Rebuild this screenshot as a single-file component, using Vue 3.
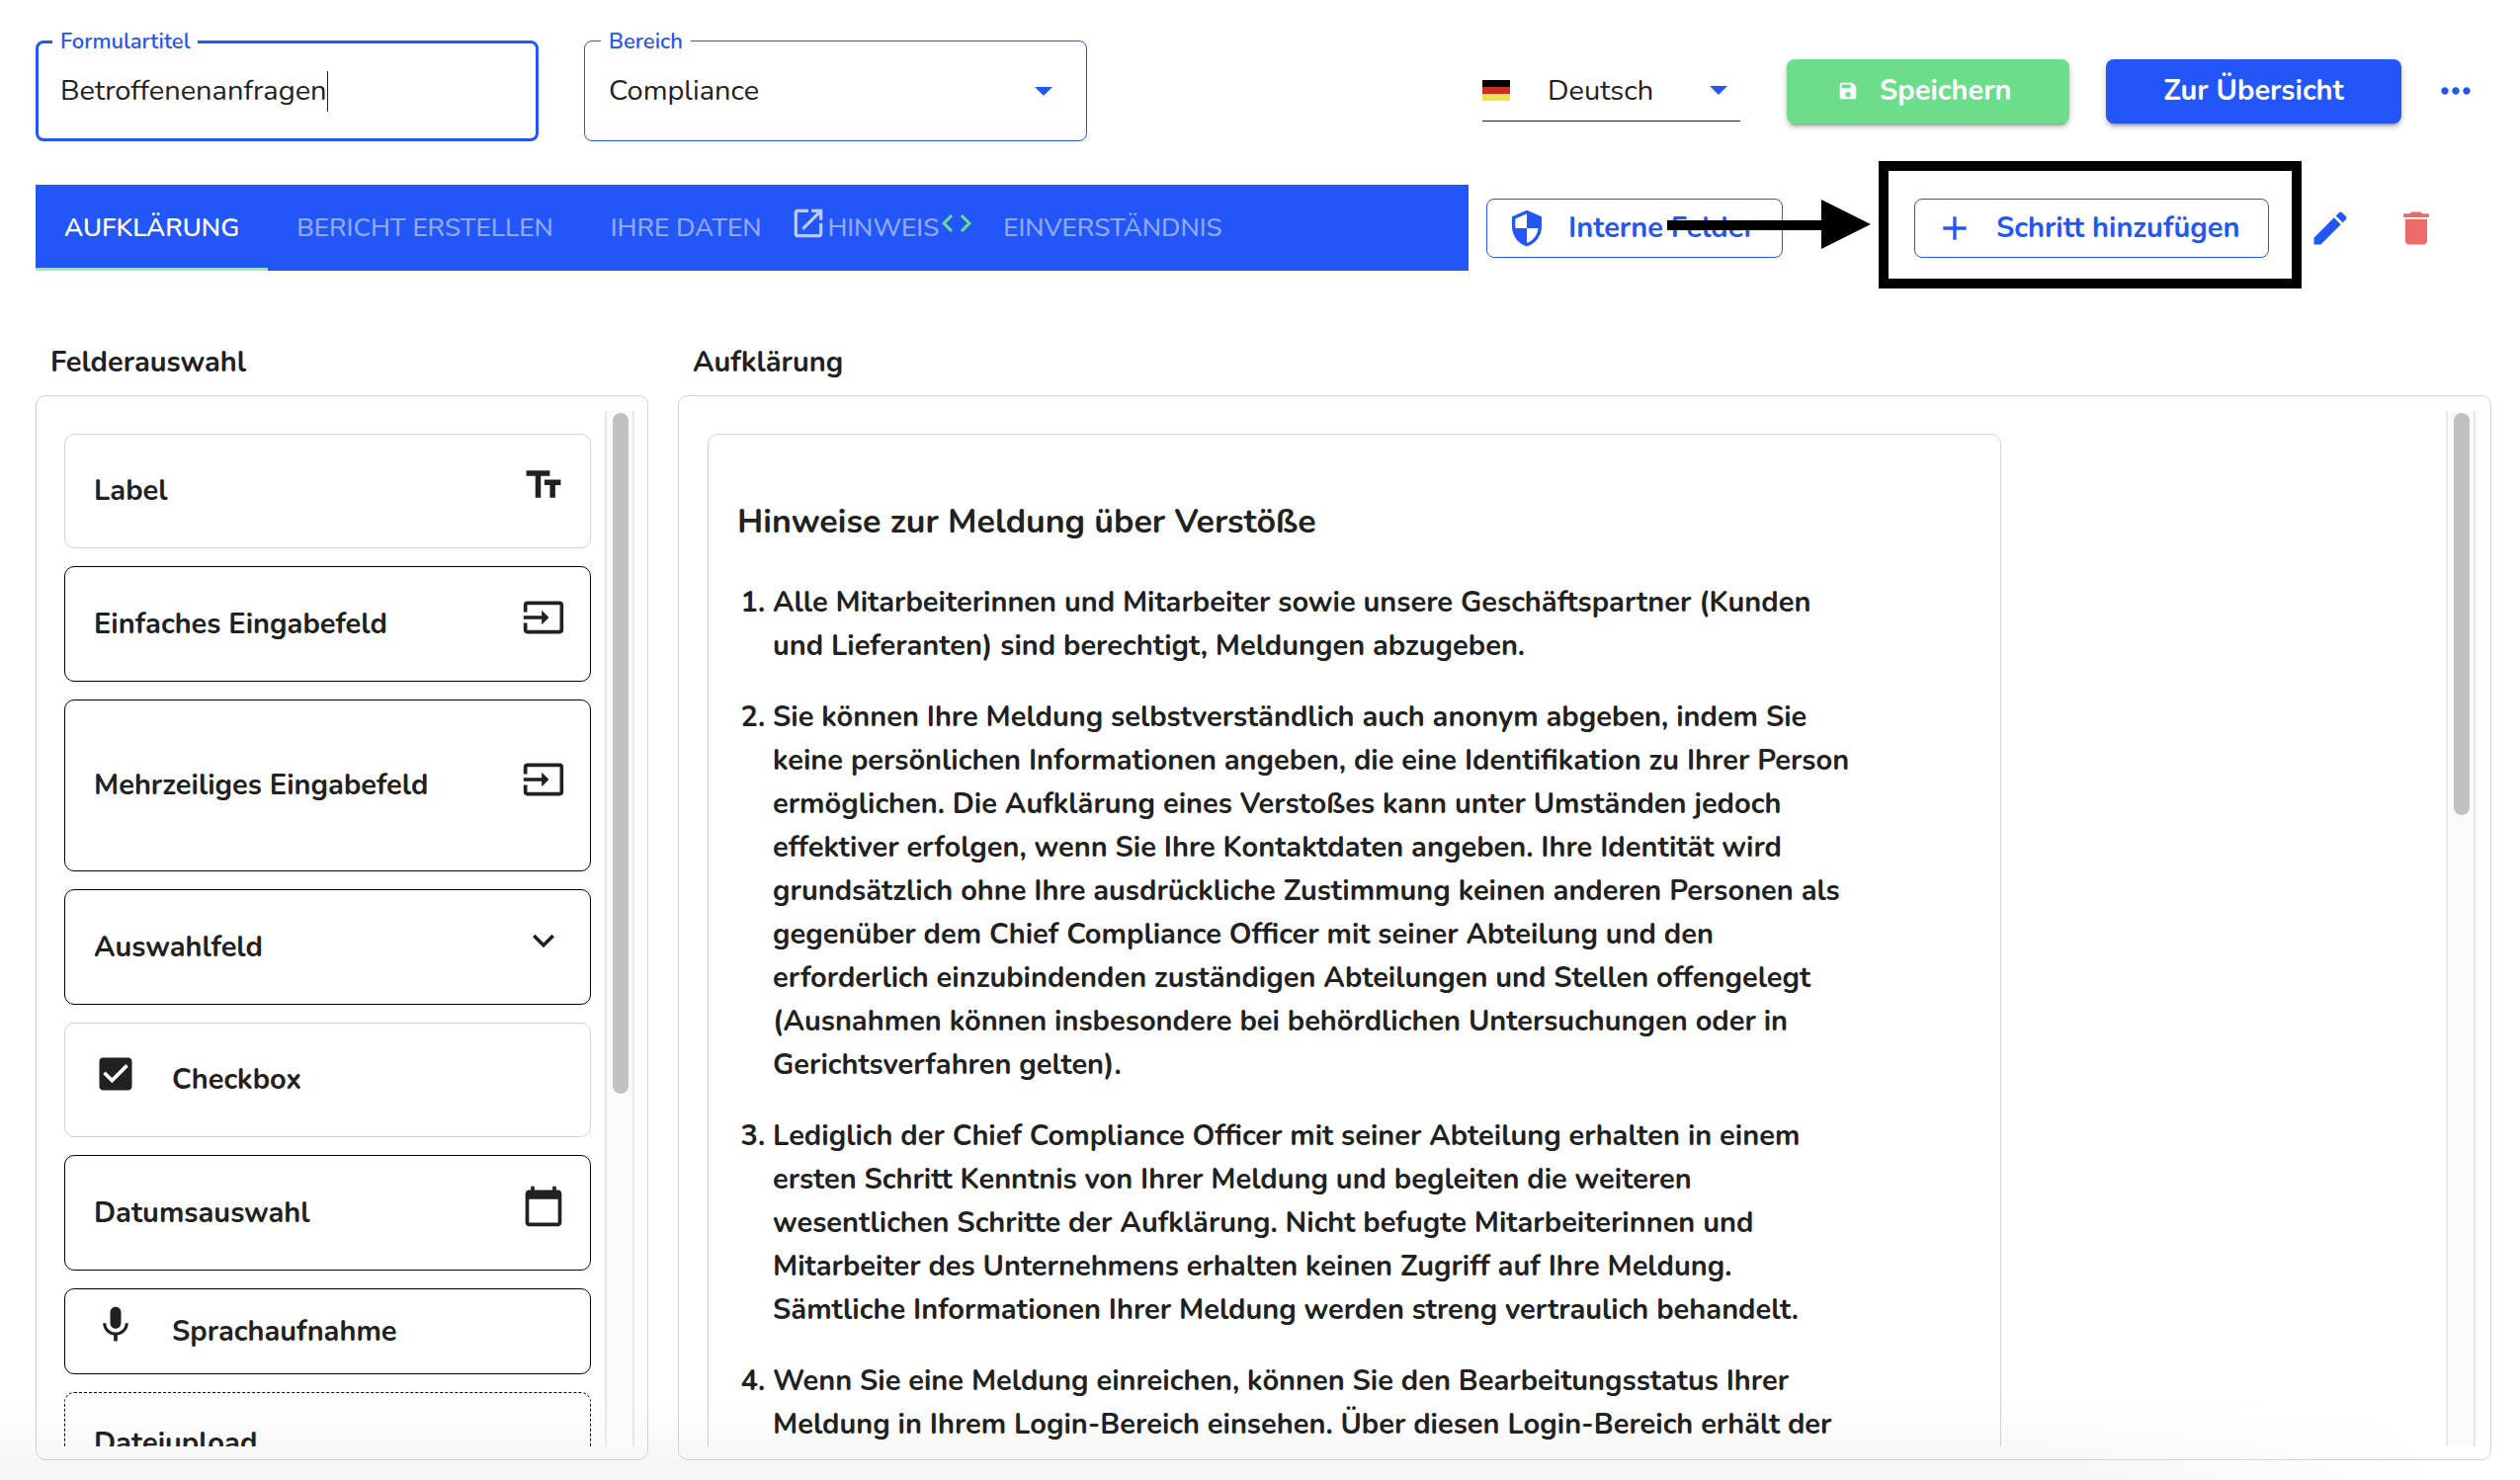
<script setup>
import { ref } from 'vue'

const title = ref('Betroffenenanfragen')
const area = ref('Compliance')
const language = ref('Deutsch')

const icons = {
  text: 'M2.5 4v3h5v12h3V7h5V4h-13zm19 5h-9v3h3v7h3v-7h3V9z',
  input: 'M21 3.01H3c-1.1 0-2 .9-2 2V9h2V4.99h18v14.03H3V15H1v4.01c0 1.1.9 1.98 2 1.98h18c1.1 0 2-.88 2-1.98v-14c0-1.11-.9-2-2-2zM11 16l4-4-4-4v3H1v2h10v3z',
  chevron: 'M16.59 8.59L12 13.17 7.41 8.59 6 10l6 6 6-6z',
  checkbox: 'M19 3H5c-1.11 0-2 .9-2 2v14c0 1.1.89 2 2 2h14c1.11 0 2-.9 2-2V5c0-1.1-.89-2-2-2zm-9 14l-5-5 1.41-1.41L10 14.17l7.59-7.59L19 8l-9 9z',
  calendar: 'M20 3h-1V1h-2v2H7V1H5v2H4c-1.1 0-2 .9-2 2v16c0 1.1.9 2 2 2h16c1.1 0 2-.9 2-2V5c0-1.1-.9-2-2-2zm0 18H4V8h16v13z',
  mic: 'M12 14c1.66 0 2.99-1.34 2.99-3L15 5c0-1.66-1.34-3-3-3S9 3.34 9 5v6c0 1.66 1.34 3 3 3zm5.3-3c0 3-2.54 5.1-5.3 5.1S6.7 14 6.7 11H5c0 3.41 2.72 6.23 6 6.72V21h2v-3.28c3.28-.48 6-3.3 6-6.72h-1.7z',
  save: 'M17 3H5c-1.11 0-2 .9-2 2v14c0 1.1.89 2 2 2h14c1.1 0 2-.9 2-2V7l-4-4zm-5 16c-1.66 0-3-1.34-3-3s1.34-3 3-3 3 1.34 3 3-1.34 3-3 3zm3-10H5V5h10v4z',
  more: 'M6 10c-1.1 0-2 .9-2 2s.9 2 2 2 2-.9 2-2-.9-2-2-2zm12 0c-1.1 0-2 .9-2 2s.9 2 2 2 2-.9 2-2-.9-2-2-2zm-6 0c-1.1 0-2 .9-2 2s.9 2 2 2 2-.9 2-2-.9-2-2-2z',
  open: 'M19 19H5V5h7V3H5c-1.11 0-2 .9-2 2v14c0 1.1.89 2 2 2h14c1.1 0 2-.9 2-2v-7h-2v7zM14 3v2h3.59l-9.83 9.83 1.41 1.41L19 6.41V10h2V3h-7z',
  code: 'M9.4 16.6L4.8 12l4.6-4.6L8 6l-6 6 6 6 1.4-1.4zm5.2 0l4.6-4.6-4.6-4.6L16 6l6 6-6 6-1.4-1.4z',
  shield: 'M12 1L3 5v6c0 5.55 3.84 10.74 9 12 5.16-1.26 9-6.45 9-12V5l-9-4zm0 10.99h7c-.53 4.12-3.28 7.79-7 8.94V12H5V6.3l7-3.11v8.8z',
  plus: 'M19 13h-6v6h-2v-6H5v-2h6V5h2v6h6v2z',
  pencil: 'M3 17.25V21h3.75L17.81 9.94l-3.75-3.75L3 17.25zM20.71 7.04c.39-.39.39-1.02 0-1.41l-2.34-2.34c-.39-.39-1.02-.39-1.41 0l-1.83 1.83 3.75 3.75 1.83-1.83z',
  trash: 'M6 19c0 1.1.9 2 2 2h8c1.1 0 2-.9 2-2V7H6v12zM19 4h-3.5l-1-1h-5l-1 1H5v2h14V4z',
}

const fields = [
  { label: 'Label', icon: 'text', kind: 'light' },
  { label: 'Einfaches Eingabefeld', icon: 'input' },
  { label: 'Mehrzeiliges Eingabefeld', icon: 'input', size: 'tall' },
  { label: 'Auswahlfeld', icon: 'chevron' },
  { label: 'Checkbox', icon: 'checkbox', kind: 'light', lead: true },
  { label: 'Datumsauswahl', icon: 'calendar' },
  { label: 'Sprachaufnahme', icon: 'mic', size: 'low', lead: true },
  { label: 'Dateiupload', kind: 'dashed', size: 'drop' },
]

const notes = [
  'Alle Mitarbeiterinnen und Mitarbeiter sowie unsere Geschäftspartner (Kunden und Lieferanten) sind berechtigt, Meldungen abzugeben.',
  'Sie können Ihre Meldung selbstverständlich auch anonym abgeben, indem Sie keine persönlichen Informationen angeben, die eine Identifikation zu Ihrer Person ermöglichen. Die Aufklärung eines Verstoßes kann unter Umständen jedoch effektiver erfolgen, wenn Sie Ihre Kontaktdaten angeben. Ihre Identität wird grundsätzlich ohne Ihre ausdrückliche Zustimmung keinen anderen Personen als gegenüber dem Chief Compliance Officer mit seiner Abteilung und den erforderlich einzubindenden zuständigen Abteilungen und Stellen offengelegt (Ausnahmen können insbesondere bei behördlichen Untersuchungen oder in Gerichtsverfahren gelten).',
  'Lediglich der Chief Compliance Officer mit seiner Abteilung erhalten in einem ersten Schritt Kenntnis von Ihrer Meldung und begleiten die weiteren wesentlichen Schritte der Aufklärung. Nicht befugte Mitarbeiterinnen und Mitarbeiter des Unternehmens erhalten keinen Zugriff auf Ihre Meldung. Sämtliche Informationen Ihrer Meldung werden streng vertraulich behandelt.',
  'Wenn Sie eine Meldung einreichen, können Sie den Bearbeitungsstatus Ihrer Meldung in Ihrem Login-Bereich einsehen. Über diesen Login-Bereich erhält der',
]
</script>

<template>
  <div class="page">
    <header class="top">
      <div class="field focused">
        <label for="title">Formulartitel</label>
        <input id="title" v-model="title" type="text" />
        <span class="caret"></span>
      </div>
      <div class="field">
        <label for="area">Bereich</label>
        <select id="area" v-model="area">
          <option>Compliance</option>
        </select>
        <span class="arrow"></span>
      </div>
      <div class="language">
        <svg class="flag" viewBox="0 0 28 21" aria-hidden="true">
          <path fill="#000" d="M0 0h28v7H0z" />
          <path fill="#c72f22" d="M0 7h28v7H0z" />
          <path fill="#ebe34c" d="M0 14h28v7H0z" />
        </svg>
        <select v-model="language" aria-label="Sprache">
          <option>Deutsch</option>
        </select>
        <span class="arrow"></span>
      </div>
      <button class="solid save" type="button">
        <svg viewBox="0 0 24 24"><path :d="icons.save" /></svg>
        Speichern
      </button>
      <button class="solid overview" type="button">Zur Übersicht</button>
      <button class="icon-button more" type="button" aria-label="Mehr">
        <svg viewBox="0 0 24 24"><path :d="icons.more" /></svg>
      </button>
    </header>

    <div class="steps">
      <nav class="tabs">
        <button class="tab active" type="button">AUFKLÄRUNG</button>
        <button class="tab" type="button">BERICHT ERSTELLEN</button>
        <button class="tab" type="button">IHRE DATEN</button>
        <button class="tab tight" type="button">
          <svg class="open" viewBox="0 0 24 24"><path :d="icons.open" /></svg>
          HINWEIS
          <svg class="code" viewBox="0 0 24 24"><path :d="icons.code" /></svg>
        </button>
        <button class="tab" type="button">EINVERSTÄNDNIS</button>
      </nav>
      <button class="outline internal" type="button">
        <svg viewBox="0 0 24 24"><path :d="icons.shield" /></svg>
        Interne Felder
      </button>
      <div class="marked">
        <button class="outline add" type="button">
          <svg viewBox="0 0 24 24"><path :d="icons.plus" /></svg>
          Schritt hinzufügen
        </button>
        <span class="frame"></span>
        <svg class="pointer" viewBox="0 0 206 50" aria-hidden="true">
          <path d="M0 21h156V0l50 25-50 25V31H0z" />
        </svg>
      </div>
      <button class="icon-button" type="button" aria-label="Bearbeiten">
        <svg viewBox="0 0 24 24"><path :d="icons.pencil" /></svg>
      </button>
      <button class="icon-button delete" type="button" aria-label="Löschen">
        <svg viewBox="0 0 24 24"><path :d="icons.trash" /></svg>
      </button>
    </div>

    <main class="columns">
      <section class="column picker">
        <h2>Felderauswahl</h2>
        <div class="panel">
          <ul class="cards">
            <li v-for="f in fields" :key="f.label" class="card" :class="[f.kind, f.size, { lead: f.lead }]">
              <span>{{ f.label }}</span>
              <svg v-if="f.icon" viewBox="0 0 24 24"><path :d="icons[f.icon]" /></svg>
            </li>
          </ul>
          <div class="track"><div class="thumb long"></div></div>
        </div>
      </section>

      <section class="column editor">
        <h2>Aufklärung</h2>
        <div class="panel">
          <div class="canvas">
            <article class="notice">
              <h3>Hinweise zur Meldung über Verstöße</h3>
              <ol>
                <li v-for="n in notes" :key="n">{{ n }}</li>
              </ol>
            </article>
          </div>
          <div class="track"><div class="thumb short"></div></div>
        </div>
      </section>
    </main>
  </div>
</template>

<style>
body {
  margin: 0;
  background: #fff;
}
</style>

<style scoped>
* {
  box-sizing: border-box;
}

.page {
  --blue: #2356f8;
  display: flex;
  flex-direction: column;
  height: 100vh;
  overflow: hidden;
  padding: 41px 29px 20px 36px;
  background:
    linear-gradient(to right, transparent 80%, #fff 97%),
    linear-gradient(to top, #f4f4f4, #fff 80px);
  color: #212121;
  font-family: Nunito, "Open Sans", sans-serif;
  font-size: 29px;
  line-height: 40px;
}

button,
input,
select {
  margin: 0;
  padding: 0;
  border: 0;
  background: none;
  color: inherit;
  font: inherit;
}

select {
  appearance: none;
}

input:focus,
select:focus {
  outline: 0;
}

svg {
  flex: none;
  fill: currentColor;
}

.top,
.steps {
  display: flex;
  flex: none;
  align-items: center;
}

.top {
  padding-right: 14px;
}

/* Outlined form fields */
.field {
  position: relative;
  display: flex;
  align-items: center;
  width: 509px;
  height: 102px;
  margin-right: 46px;
  padding-left: 24px;
  border: 1px solid var(--blue);
  border-radius: 8px;
}

.field.focused {
  padding-left: 22px;
  border-width: 3px;
}

.field label {
  position: absolute;
  top: -15px;
  left: 16px;
  padding: 0 8px;
  background: #fff;
  color: var(--blue);
  font-size: 22px;
  font-weight: 600;
  line-height: 30px;
}

.field.focused label {
  top: -17px;
  left: 14px;
}

.field input {
  field-sizing: content;
  caret-color: transparent;
}

.field select {
  width: 100%;
  height: 100%;
}

.caret {
  width: 1px;
  height: 41px;
  background: #212121;
}

.arrow {
  position: absolute;
  right: 34px;
  border: 9px solid transparent;
  border-top-color: var(--blue);
  border-bottom: 0;
  pointer-events: none;
}

.language {
  position: relative;
  display: flex;
  align-items: center;
  gap: 38px;
  width: 261px;
  height: 61px;
  margin-left: auto;
  border-bottom: 1px solid #212121;
}

.language select {
  flex: 1;
}

.language .arrow {
  right: 13px;
}

.flag {
  width: 28px;
  height: 21px;
}

/* Buttons */
.solid {
  display: flex;
  align-items: center;
  justify-content: center;
  height: 65px;
  border-radius: 8px;
  box-shadow: 0 5px 2px -3px rgba(0, 0, 0, 0.2), 0 4px 4px rgba(0, 0, 0, 0.14), 0 2px 9px rgba(0, 0, 0, 0.12);
  color: #fff;
  font-weight: 700;
}

.save {
  gap: 21px;
  justify-content: flex-start;
  width: 286px;
  margin-left: 47px;
  padding-left: 51px;
  background: #6cdd8a;
}

.save svg {
  width: 22px;
  height: 22px;
}

.overview {
  width: 299px;
  margin-left: 37px;
  background: var(--blue);
}

.icon-button {
  display: flex;
  flex: none;
  margin-left: 40px;
  color: var(--blue);
}

.icon-button svg {
  width: 44px;
  height: 44px;
}

.icon-button.more {
  margin-left: 33px;
}

.icon-button.delete {
  margin-right: 54px;
  margin-left: 43px;
  color: #ec6a6a;
}

.outline {
  display: flex;
  align-items: center;
  gap: 22px;
  height: 60px;
  padding-left: 20px;
  border: 1px solid var(--blue);
  border-radius: 8px;
  color: var(--blue);
  font-weight: 700;
  white-space: nowrap;
}

.outline svg {
  width: 40px;
  height: 40px;
}

.internal {
  width: 300px;
  margin-left: 18px;
}

.add {
  width: 359px;
}

/* Steps */
.steps {
  margin-top: 44px;
}

.tabs {
  display: flex;
  flex: 1;
  height: 87px;
  background: var(--blue);
}

.tab {
  display: flex;
  align-items: center;
  padding: 0 29px;
  color: rgba(255, 255, 255, 0.5);
  font-size: 26px;
  font-weight: 500;
  white-space: nowrap;
}

.tab.active {
  box-shadow: inset 0 -3px #a6eb97;
  color: #fff;
  font-weight: 600;
}

.tab.tight {
  padding: 0;
}

.tab svg {
  margin-bottom: 10px;
}

.open {
  width: 38px;
  height: 38px;
  color: #bccbfc;
}

.code {
  width: 36px;
  height: 36px;
  color: #6cdd8a;
}

/* Highlight around the add button */
.marked {
  position: relative;
  margin-left: 133px;
}

.frame {
  position: absolute;
  inset: -38px -33px -31px -36px;
  border: 10px solid #000;
  pointer-events: none;
}

.pointer {
  position: absolute;
  top: 1px;
  right: 100%;
  width: 206px;
  height: 50px;
  margin-right: 44px;
  fill: #000;
  pointer-events: none;
}

/* Columns */
.columns {
  display: flex;
  flex: 1;
  gap: 30px;
  min-height: 0;
  margin-top: 73px;
}

.column {
  display: flex;
  flex-direction: column;
  min-height: 0;
}

.picker {
  flex: none;
  width: 620px;
}

.editor {
  flex: 1;
  min-width: 0;
}

h2 {
  margin: 0 0 13px 15px;
  font-size: 29px;
  font-weight: 700;
}

.panel {
  display: flex;
  flex: 1;
  min-height: 0;
  padding: 15px 13px 13px 28px;
  border: 1px solid #d2d2d2;
  border-radius: 10px;
}

.cards,
.canvas {
  flex: 1;
  min-width: 0;
  overflow: hidden;
  padding-top: 23px;
}

.cards {
  display: flex;
  flex-direction: column;
  gap: 18px;
  margin: 0;
  padding-left: 0;
  list-style: none;
}

.card {
  display: flex;
  flex: none;
  align-items: center;
  justify-content: space-between;
  height: 117px;
  margin-right: 14px;
  padding: 0 25px 0 29px;
  border: 1px solid #000;
  border-radius: 10px;
  font-weight: 700;
}

.card svg {
  width: 44px;
  height: 44px;
  margin-bottom: 13px;
}

.card.light {
  height: 116px;
  border-color: #d2d2d2;
}

.card.tall {
  height: 174px;
}

.card.low {
  height: 87px;
}

.card.drop {
  height: 104px;
}

.card.dashed {
  border-style: dashed;
}

.card.lead {
  flex-direction: row-reverse;
  gap: 35px;
  justify-content: flex-end;
}

.track {
  flex: none;
  width: 30px;
  padding: 2px 6px;
  border: solid #e8e8e8;
  border-width: 0 2px;
  background: #fafafa;
}

.thumb {
  width: 16px;
  border-radius: 8px;
  background: #c1c1c1;
}

.long {
  height: 66%;
}

.short {
  height: 39%;
}

.editor .panel {
  padding-right: 15px;
  padding-left: 29px;
}

.notice {
  max-width: 1309px;
  padding: 66px 139px 66px 29px;
  border: 1px solid #d2d2d2;
  border-radius: 10px;
}

h3 {
  margin: 0 0 38px;
  font-size: 34px;
  font-weight: 700;
  line-height: 44px;
}

ol {
  margin: 0;
  padding-left: 36px;
  font-weight: 700;
  line-height: 44px;
}

ol li + li {
  margin-top: 28px;
}
</style>
